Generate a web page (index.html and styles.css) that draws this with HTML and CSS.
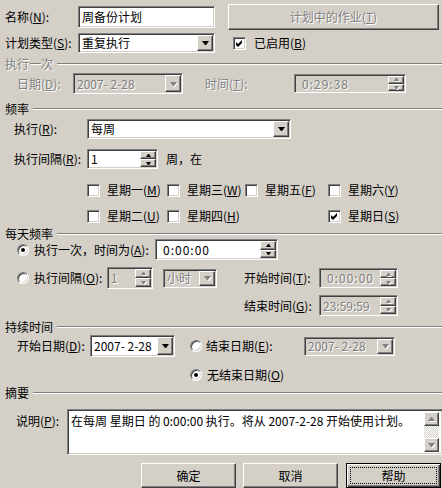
FILE: index.html
```html
<!DOCTYPE html>
<html lang="zh-CN">
<head>
    <meta charset="UTF-8">
    <title>计划任务</title>
    <link rel="stylesheet" href="styles.css">
</head>
<body>
<div class="dialog">
    <!-- 名称 -->
    <div class="row r-name">
        <span class="label l-top">名称(<u>N</u>):</span>
        <div class="field name-box"><span class="val">周备份计划</span></div>
        <div class="button jobs-btn"><span class="disabled">计划中的作业(<u>T</u>)</span></div>
    </div>
    <div class="row r-type">
        <span class="label l-top">计划类型(<u>S</u>):</span>
        <div class="field type-combo"><span class="val">重复执行</span><span class="raised drop"><i class="tri-down"></i></span></div>
        <span class="check enabled-check"><span class="box"><svg width="7" height="7" viewBox="0 0 7 7"><polygon points="0,2 2,4 6,0 6,3 2,7 0,5" fill="#000"/></svg></span><span>已启用(<u>B</u>)</span></span>
    </div>

    <!-- 执行一次 -->
    <div class="group g-once"><span class="disabled">执行一次</span><i class="rule"></i></div>
    <div class="row r-date">
        <span class="label l-date disabled">日期(<u>D</u>):</span>
        <div class="field off date-combo"><span class="val disabled">2007- 2-28</span><span class="raised drop"><i class="tri-down off-tri"></i></span></div>
        <span class="label l-time disabled">时间(<u>T</u>):</span>
        <div class="field off time-spin"><span class="val disabled spaced">0:29:38</span><span class="spin-btns"><span class="raised sb"><i class="tri-up-s off-tri"></i></span><span class="raised sb"><i class="tri-down-s off-tri"></i></span></span></div>
    </div>

    <!-- 频率 -->
    <div class="group g-freq"><span>频率</span><i class="rule"></i></div>
    <div class="row r-run">
        <span class="label l-run">执行(<u>R</u>):</span>
        <div class="field run-combo"><span class="val">每周</span><span class="raised drop"><i class="tri-down"></i></span></div>
    </div>
    <div class="row r-interval">
        <span class="label l-run">执行间隔(<u>R</u>):</span>
        <div class="field interval-spin"><span class="val">1</span><span class="spin-btns"><span class="raised sb"><i class="tri-up-s"></i></span><span class="raised sb"><i class="tri-down-s"></i></span></span></div>
        <span class="label l-week">周，在</span>
    </div>
    <div class="days">
        <span class="check"><span class="box"></span><span>星期一(<u>M</u>)</span></span>
        <span class="check"><span class="box"></span><span>星期三(<u>W</u>)</span></span>
        <span class="check"><span class="box"></span><span>星期五(<u>F</u>)</span></span>
        <span class="check"><span class="box"></span><span>星期六(<u>Y</u>)</span></span>
        <span class="check"><span class="box"></span><span>星期二(<u>U</u>)</span></span>
        <span class="check"><span class="box"></span><span>星期四(<u>H</u>)</span></span>
        <span class="check sun"><span class="box"><svg width="7" height="7" viewBox="0 0 7 7"><polygon points="0,2 2,4 6,0 6,3 2,7 0,5" fill="#000"/></svg></span><span>星期日(<u>S</u>)</span></span>
    </div>

    <!-- 每天频率 -->
    <div class="group g-daily"><span>每天频率</span><i class="rule"></i></div>
    <div class="row r-once">
        <span class="radio on"></span>
        <span class="label l-once">执行一次，时间为(<u>A</u>):</span>
        <div class="field at-spin"><span class="val spaced">0:00:00</span><span class="spin-btns"><span class="raised sb"><i class="tri-up-s"></i></span><span class="raised sb"><i class="tri-down-s"></i></span></span></div>
    </div>
    <div class="row r-every">
        <span class="radio"></span>
        <span class="label l-every">执行间隔(<u>O</u>):</span>
        <div class="field off every-spin"><span class="val disabled">1</span><span class="spin-btns"><span class="raised sb"><i class="tri-up-s off-tri"></i></span><span class="raised sb"><i class="tri-down-s off-tri"></i></span></span></div>
        <div class="field off unit-combo"><span class="val disabled">小时</span><span class="raised drop"><i class="tri-down off-tri"></i></span></div>
        <span class="label l-start">开始时间(<u>T</u>):</span>
        <div class="field off range-spin"><span class="val disabled spaced">0:00:00</span><span class="spin-btns"><span class="raised sb"><i class="tri-up-s off-tri"></i></span><span class="raised sb"><i class="tri-down-s off-tri"></i></span></span></div>
    </div>
    <div class="row r-endtime">
        <span class="label l-start">结束时间(<u>G</u>):</span>
        <div class="field off range-spin end"><span class="val disabled">23:59:59</span><span class="spin-btns"><span class="raised sb"><i class="tri-up-s off-tri"></i></span><span class="raised sb"><i class="tri-down-s off-tri"></i></span></span></div>
    </div>

    <!-- 持续时间 -->
    <div class="group g-dur"><span>持续时间</span><i class="rule"></i></div>
    <div class="row r-startdate">
        <span class="label l-sdate">开始日期(<u>D</u>):</span>
        <div class="field start-combo"><span class="val">2007- 2-28</span><span class="raised drop"><i class="tri-down"></i></span></div>
        <span class="radio r-enddate"></span>
        <span class="label l-edate">结束日期(<u>E</u>):</span>
        <div class="field off end-combo"><span class="val disabled">2007- 2-28</span><span class="raised drop"><i class="tri-down off-tri"></i></span></div>
    </div>
    <div class="row r-noend">
        <span class="radio on"></span>
        <span class="label">无结束日期(<u>O</u>)</span>
    </div>

    <!-- 摘要 -->
    <div class="group g-sum"><span>摘要</span><i class="rule"></i></div>
    <div class="row r-desc">
        <span class="label l-desc">说明(<u>P</u>):</span>
        <div class="field memo">
            <span class="memo-text">在每周 星期日 的 0:00:00 执行。将从 2007-2-28 开始使用计划。</span>
            <span class="scroll">
                <span class="raised sbtn"><i class="tri-up off-tri"></i></span>
                <span class="track"></span>
                <span class="raised sbtn"><i class="tri-down off-tri"></i></span>
            </span>
        </div>
    </div>

    <div class="row r-buttons">
        <div class="button push">确定</div>
        <div class="button push">取消</div>
        <div class="button push default">帮助</div>
    </div>
</div>
</body>
</html>
```

FILE: styles.css
```css
html, body {
    margin: 0;
    padding: 0;
}

body {
    background: #d4d0c8;
    font-family: "Noto Sans CJK SC", "Liberation Sans", sans-serif;
    font-size: 12px;
    line-height: 14px;
    color: #000;
}

u {
    text-decoration: underline;
    text-underline-offset: 1px;
}

.dialog {
    width: 442px;
    height: 488px;
    overflow: hidden;
}

.row {
    display: flex;
    align-items: center;
}

.label {
    flex: none;
    white-space: nowrap;
}

.disabled {
    color: #808080;
    text-shadow: 1px 1px 0 #fff;
}

/* sunken edit / combo box */
.field {
    box-sizing: border-box;
    flex: none;
    display: flex;
    align-items: center;
    padding: 1px;
    background: #fff;
    border: 1px solid;
    border-color: #808080 #fff #fff #808080;
    box-shadow: inset 1px 1px 0 #404040, inset -1px -1px 0 #d4d0c8;
}

.field.off {
    background: #d4d0c8;
}

.val {
    padding-left: 2px;
    white-space: nowrap;
}

.spaced {
    letter-spacing: 1px;
    padding-left: 6px;
}

.raised {
    box-sizing: border-box;
    background: #d4d0c8;
    border: 1px solid;
    border-color: #fff #404040 #404040 #fff;
    box-shadow: inset -1px -1px 0 #808080, inset 1px 1px 0 #d4d0c8;
}

.drop {
    margin-left: auto;
    align-self: stretch;
    width: 16px;
    display: flex;
    align-items: center;
    justify-content: center;
}

.spin-btns {
    margin-left: auto;
    align-self: stretch;
    width: 16px;
    display: flex;
    flex-direction: column;
}

.sb {
    flex: 1;
    display: flex;
    align-items: center;
    justify-content: center;
}

.tri-down, .tri-up, .tri-down-s, .tri-up-s {
    display: block;
    width: 1px;
    height: 0;
}

.tri-down {
    border-left: 3px solid transparent;
    border-right: 3px solid transparent;
    border-top: 4px solid #000;
}

.tri-up {
    border-left: 3px solid transparent;
    border-right: 3px solid transparent;
    border-bottom: 4px solid #000;
}

.tri-down-s {
    border-left: 2px solid transparent;
    border-right: 2px solid transparent;
    border-top: 3px solid #000;
}

.tri-up-s {
    border-left: 2px solid transparent;
    border-right: 2px solid transparent;
    border-bottom: 3px solid #000;
}

.off-tri {
    border-top-color: #808080;
    border-bottom-color: #808080;
    filter: drop-shadow(1px 1px 0 #fff);
}

.tri-down.off-tri, .tri-down-s.off-tri {
    border-bottom: none;
}

.tri-up.off-tri, .tri-up-s.off-tri {
    border-top: none;
}

/* push buttons */
.button {
    box-sizing: border-box;
    flex: none;
    display: flex;
    align-items: center;
    justify-content: center;
    background: #d4d0c8;
    border: 1px solid;
    border-color: #fff #404040 #404040 #fff;
    box-shadow: inset -1px -1px 0 #808080;
}

.button.default {
    border: 1px solid #000;
    box-shadow: inset 1px 1px 0 #fff, inset -1px -1px 0 #404040, inset -2px -2px 0 #808080;
    position: relative;
}

.button.default::after {
    content: "";
    position: absolute;
    inset: 3px;
    border: 1px dotted #000;
}

/* check box and radio */
.check {
    display: flex;
    align-items: center;
    white-space: nowrap;
    gap: 7px;
}

.box {
    box-sizing: border-box;
    flex: none;
    width: 13px;
    height: 13px;
    background: #fff;
    border: 1px solid;
    border-color: #808080 #fff #fff #808080;
    box-shadow: inset 1px 1px 0 #404040, inset -1px -1px 0 #d4d0c8;
    display: flex;
    align-items: center;
    justify-content: center;
}

.radio {
    box-sizing: border-box;
    flex: none;
    width: 12px;
    height: 12px;
    border-radius: 50%;
    background: #fff;
    border: 1px solid;
    border-color: #808080 #fff #fff #808080;
    box-shadow: inset 1px 1px 0 #404040, inset -1px -1px 0 #d4d0c8;
    display: flex;
    align-items: center;
    justify-content: center;
}

.radio.on::after {
    content: "";
    width: 4px;
    height: 4px;
    border-radius: 50%;
    background: #000;
}

/* group headings */
.group {
    display: flex;
    align-items: center;
    height: 12px;
    padding-left: 5px;
    gap: 4px;
    white-space: nowrap;
}

.rule {
    flex: 1;
    height: 0;
    border-top: 1px solid #808080;
    border-bottom: 1px solid #fff;
}

/* rows */
.r-name {
    margin-top: 4px;
    height: 26px;
    padding-left: 5px;
}

.l-top {
    width: 73px;
}

.name-box {
    width: 137px;
    height: 22px;
}

.jobs-btn {
    margin-left: 13px;
    width: 211px;
    height: 26px;
}

.r-type {
    margin-top: 3px;
    height: 20px;
    padding-left: 5px;
}

.type-combo {
    width: 137px;
    height: 20px;
}

.enabled-check {
    margin-left: 18px;
    gap: 8px;
}

.g-once {
    margin-top: 5px;
}

.r-date {
    margin-top: 3px;
    height: 21px;
    padding-left: 17px;
}

.l-date {
    width: 56px;
}

.date-combo {
    width: 110px;
    height: 21px;
}

.l-time {
    margin-left: 22px;
    width: 89px;
}

.time-spin {
    width: 112px;
    height: 19px;
}

.g-freq {
    margin-top: 9px;
}

.r-run {
    margin-top: 4px;
    height: 20px;
    padding-left: 14px;
}

.l-run {
    width: 73px;
}

.run-combo {
    width: 204px;
    height: 20px;
}

.r-interval {
    margin-top: 10px;
    height: 20px;
    padding-left: 14px;
}

.interval-spin {
    width: 71px;
    height: 20px;
}

.l-week {
    margin-left: 8px;
}

.days {
    margin-top: 14px;
    margin-left: 87px;
    display: grid;
    grid-template-columns: 80px 78px 83px auto;
    grid-auto-rows: 14px;
    row-gap: 12px;
}

.days .sun {
    grid-column: 4;
}

.g-daily {
    margin-top: 5px;
}

.r-once {
    margin-top: -1px;
    height: 21px;
    padding-left: 17px;
}

.l-once {
    margin-left: 5px;
    width: 121px;
}

.at-spin {
    width: 123px;
    height: 21px;
}

.r-every {
    margin-top: 7px;
    height: 22px;
    padding-left: 17px;
}

.l-every {
    margin-left: 5px;
    width: 73px;
}

.every-spin {
    width: 46px;
    height: 22px;
}

.unit-combo {
    margin-left: 10px;
    width: 54px;
    height: 19px;
}

.r-every .l-start {
    margin-left: 27px;
}

.l-start {
    width: 75px;
}

.range-spin {
    width: 79px;
    height: 20px;
}

.range-spin.end {
    height: 21px;
}

.r-endtime {
    margin-top: 6px;
    height: 21px;
    padding-left: 244px;
}

.g-dur {
    margin-top: 5px;
}

.r-startdate {
    margin-top: 2px;
    height: 22px;
    padding-left: 17px;
}

.l-sdate {
    width: 73px;
}

.start-combo {
    width: 85px;
    height: 22px;
}

.r-enddate {
    margin-left: 15px;
}

.l-edate {
    margin-left: 4px;
    width: 98px;
}

.end-combo {
    width: 91px;
    height: 19px;
}

.r-noend {
    margin-top: 11px;
    height: 14px;
    padding-left: 190px;
    gap: 5px;
}

.g-sum {
    margin-top: 5px;
}

.r-desc {
    margin-top: 10px;
    height: 46px;
    padding-left: 16px;
    align-items: flex-start;
}

.l-desc {
    width: 51px;
    margin-top: 5px;
}

.memo {
    width: 376px;
    height: 46px;
    align-items: stretch;
    padding: 2px 3px 2px 2px;
}

.memo-text {
    flex: 1;
    padding-left: 1px;
    padding-top: 2px;
    white-space: nowrap;
    overflow: hidden;
}

.scroll {
    width: 15px;
    display: flex;
    flex-direction: column;
}

.sbtn {
    height: 14px;
    display: flex;
    align-items: center;
    justify-content: center;
}

.track {
    flex: 1;
    background-image: conic-gradient(#fff 25%, #d4d0c8 0 50%, #fff 0 75%, #d4d0c8 0);
    background-size: 2px 2px;
}

.r-buttons {
    margin-top: 8px;
    padding-left: 141px;
    gap: 7px;
}

.push {
    width: 95px;
    height: 25px;
}

.push.default {
    margin-left: 1px;
}
```
